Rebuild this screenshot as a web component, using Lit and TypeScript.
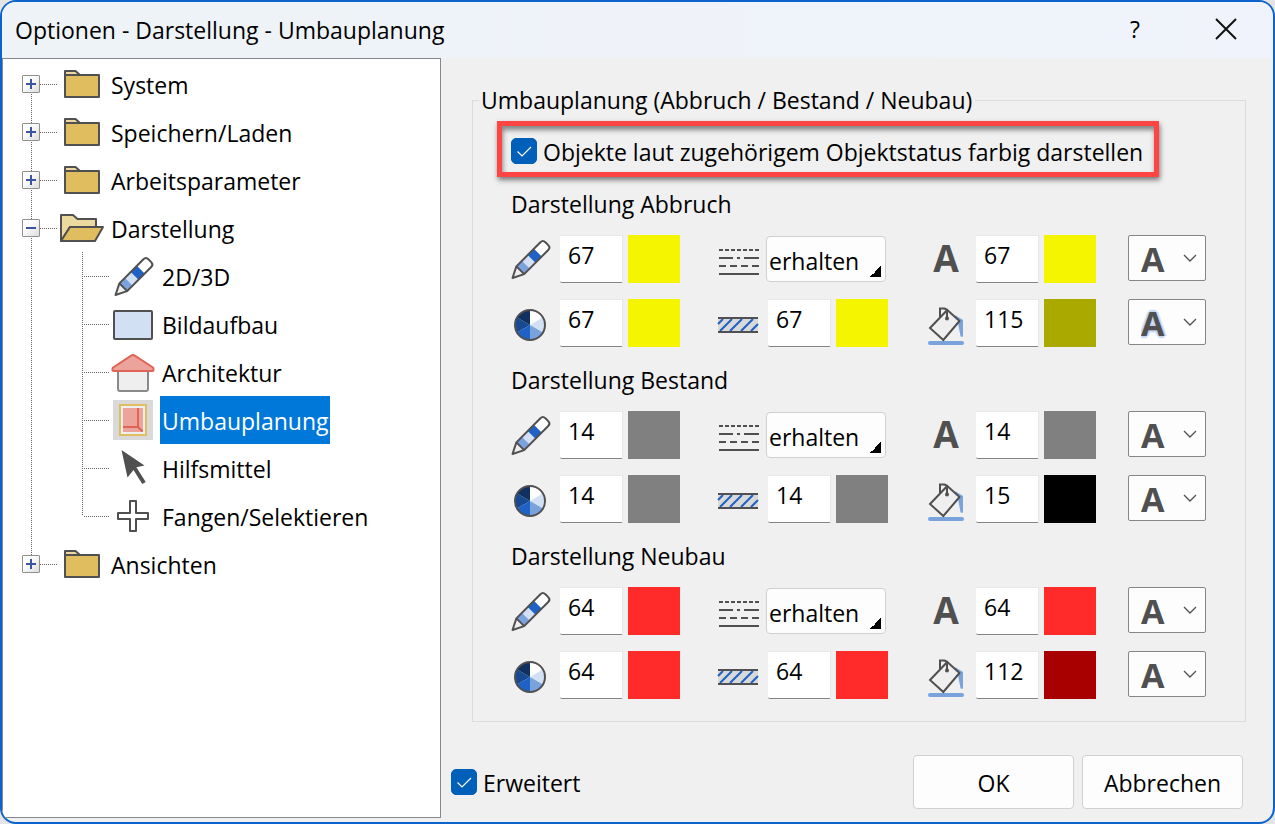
import { LitElement, html, svg, css } from "lit";
import { customElement, property } from "lit/decorators.js";

type Pair = { value: string; color: string };
type Section = { title: string; pen: Pair; text: Pair; color: Pair; hatch: Pair; fill: Pair; glow: boolean };

const SECTIONS: Section[] = [
  {
    title: "Darstellung Abbruch",
    pen: { value: "67", color: "#f5f500" },
    text: { value: "67", color: "#f5f500" },
    color: { value: "67", color: "#f5f500" },
    hatch: { value: "67", color: "#f5f500" },
    fill: { value: "115", color: "#a9a900" },
    glow: true,
  },
  {
    title: "Darstellung Bestand",
    pen: { value: "14", color: "#808080" },
    text: { value: "14", color: "#808080" },
    color: { value: "14", color: "#808080" },
    hatch: { value: "14", color: "#808080" },
    fill: { value: "15", color: "#000000" },
    glow: false,
  },
  {
    title: "Darstellung Neubau",
    pen: { value: "64", color: "#ff2b2b" },
    text: { value: "64", color: "#ff2b2b" },
    color: { value: "64", color: "#ff2b2b" },
    hatch: { value: "64", color: "#ff2b2b" },
    fill: { value: "112", color: "#a80000" },
    glow: false,
  },
];

const TREE = [
  { label: "System", icon: "folder", sign: "plus" },
  { label: "Speichern/Laden", icon: "folder", sign: "plus" },
  { label: "Arbeitsparameter", icon: "folder", sign: "plus" },
  { label: "Darstellung", icon: "folderOpen", sign: "minus" },
  { label: "2D/3D", icon: "pencil", child: true },
  { label: "Bildaufbau", icon: "screen", child: true },
  { label: "Architektur", icon: "house", child: true },
  { label: "Umbauplanung", icon: "rebuild", child: true, selected: true },
  { label: "Hilfsmittel", icon: "pointer", child: true },
  { label: "Fangen/Selektieren", icon: "cross", child: true, lastChild: true },
  { label: "Ansichten", icon: "folder", sign: "plus" },
] as Array<{ label: string; icon: string; sign?: string; child?: boolean; selected?: boolean; lastChild?: boolean }>;

const ICONS: Record<string, unknown> = {
  folder: svg`<g stroke="#505050" stroke-width="2" stroke-linejoin="round">
    <path d="M6 13V9H16.500L21 13" fill="#ecd9a0"/><rect x="6" y="13" width="34" height="22" fill="#e0be60"/></g>`,
  folderOpen: svg`<g stroke="#505050" stroke-width="2" stroke-linejoin="round">
    <path d="M2 35V9H14L18.500 13H37V21H11Z" fill="#ecd9a0"/><path d="M2 35L11 21H44L36 35Z" fill="#e0be60"/></g>`,
  pencil: svg`<g transform="translate(4.500 41) rotate(-45)" stroke-linejoin="round">
      <path d="M0 0L11 -5.500V5.500Z" fill="#efefef"/>
      <rect x="11" y="-5.500" width="8" height="11" fill="#7aa3de"/>
      <rect x="19" y="-5.500" width="8" height="11" fill="#d2e0f4"/>
      <rect x="27" y="-5.500" width="9" height="11" fill="#1f62c5"/>
      <path d="M36 -5.500H46L48.500 -3V3L46 5.500H36Z" fill="#fff"/>
      <path d="M0 0L11 -5.500H45Q48.500 -5.500 48.500 -2V2Q48.500 5.500 45 5.500H11ZM11 -5.500V5.500" fill="none" stroke="#505050" stroke-width="2"/>
    </g>`,
  screen: svg`<rect x="3" y="9" width="38" height="28" rx="1" fill="#d2e0f4" stroke="#505050" stroke-width="2"/>`,
  house: svg`<path d="M7 20H37V39Q37 41 35 41H9Q7 41 7 39Z" fill="#efefef" stroke="#8a8a8a" stroke-width="2"/>
    <path d="M21 5.200Q22 4.600 23 5.200L42 17.500Q43.500 21 41 21H3Q.5 21 2 17.500Z" fill="#eca39b" stroke="#e06456" stroke-width="2" stroke-linejoin="round"/>`,
  rebuild: svg`<rect x="2" y="2" width="40" height="40" fill="#d9d9d9"/>
    <rect x="9" y="7" width="26" height="30" fill="#efefef" stroke="#e0be60" stroke-width="2"/>
    <rect x="12" y="10" width="20" height="24" fill="#eca39b"/>
    <path d="M27 10V29H12M27 29L31.500 33.500" fill="none" stroke="#e06456" stroke-width="2"/>`,
  pointer: svg`<path d="M10.500 4L33.500 19.500L24.500 21.500L16.500 31.500Z" fill="#505050"/><path d="M21 18L33 37" stroke="#505050" stroke-width="4"/>`,
  cross: svg`<path d="M19 7H25V19H37V25H25V37H19V25H7V19H19Z" fill="#fff" stroke="#505050" stroke-width="2" stroke-linejoin="round"/>`,
  wheel: svg`<g transform="translate(22 24)">
    <path d="M0 0V-15A15 15 0 0 1 13 -7.500Z" fill="#fff"/><path d="M0 0L13 -7.500A15 15 0 0 1 13 7.500Z" fill="#d2e0f4"/>
    <path d="M0 0L13 7.500A15 15 0 0 1 0 15Z" fill="#7aa3de"/><path d="M0 0V15A15 15 0 0 1 -13 7.500Z" fill="#1f62c5"/>
    <path d="M0 0L-13 7.500A15 15 0 0 1 -13 -7.500Z" fill="#184a94"/><path d="M0 0L-13 -7.500A15 15 0 0 1 0 -15Z" fill="#10315f"/>
    <circle r="15" fill="none" stroke="#505050" stroke-width="2"/></g>`,
  lines: svg`<g stroke="#505050" stroke-width="2" fill="none">
    <path d="M3 13H43" stroke-dasharray="4 2"/><path d="M3 21H17M21 21H24M28 21H43"/>
    <path d="M3 29H43" stroke-dasharray="7 4"/><path d="M3 37H43"/></g>`,
  hatch: svg`<rect x="2" y="17" width="40" height="14" fill="#d9d9d9"/>
    <path d="M2 23L7 18M4 30L16 18M14 30L26 18M25 30L37 18M35 30L42 23" stroke="#1f62c5" stroke-width="2" fill="none"/>
    <path d="M2 17H42M2 31H42" stroke="#505050" stroke-width="2"/>`,
  bucket: svg`<path d="M31 14L39 19V35Q38 37 36.500 35L34 22Z" fill="#7aa3de"/>
    <path d="M6 42H38" stroke="#7aa3de" stroke-width="4" stroke-linecap="round"/>
    <path d="M23.300 9L35.500 20L19.300 39L6 27Z" fill="#efefef" stroke="#505050" stroke-width="2"/>
    <path d="M16 17V7.500H20Q23 7.500 23 11V17" fill="none" stroke="#505050" stroke-width="2"/><circle cx="23" cy="17.500" r="2" fill="#505050"/>`,
};

const icon = (name: string) => html`<svg class="icon" viewBox="0 0 44 44" width="44" height="44" aria-hidden="true">${ICONS[name]}</svg>`;

const base = css`
  * { box-sizing: border-box; }
  .icon { display: block; overflow: visible; }
`;

@customElement("options-tree")
class OptionsTree extends LitElement {
  static styles = [
    base,
    css`
      :host { display: block; padding-top: 1px; background: #fff; border: 1px solid #828790; }
      .list { list-style: none; margin: 0; padding: 0; }
      .row { display: flex; align-items: center; height: 48px; white-space: nowrap; }
      .rail, .branch {
        --v: repeating-linear-gradient(to bottom, #666 0 1px, transparent 1px 2px);
        --h: repeating-linear-gradient(to right, #666 0 1px, transparent 1px 2px);
        flex: none; height: 48px; background-repeat: no-repeat;
      }
      .rail { width: 56px; padding: 15px 0 0 19px; background-image: var(--v), var(--h); background-position: 28px 0, 37px 24px; background-size: 1px 48px, 18px 1px; }
      .first { background-position: 28px 24px, 37px 24px; background-size: 1px 24px, 18px 1px; }
      .last { background-size: 1px 24px, 18px 1px; }
      .plain { background-size: 1px 48px, 0 0; }
      .branch { width: 52px; background-image: var(--v), var(--h); background-position: 23px 0, 25px 24px; background-size: 1px 48px, 25px 1px; }
      .end { background-size: 1px 24px, 25px 1px; }
      .toggle {
        display: block; width: 18px; height: 18px; padding: 0; border: 1px solid #919191; border-radius: 1px;
        background: linear-gradient(135deg, #fff 30%, #dcdcdc);
      }
      .sign { display: block; }
      .name { margin-left: 6px; padding: 2px 2px 0; line-height: 46px; }
      .nested { margin-left: 5px; }
      .selected { background: #0078d9; color: #fff; }
    `,
  ];
  render() {
    const last = TREE.length - 1;
    return html`<ul class="list">${TREE.map((n, i) => html`
      <li class="row">
        <div class="rail ${n.child ? "plain" : i === 0 ? "first" : i === last ? "last" : ""}">
          ${n.sign ? html`<button class="toggle" aria-label="${n.label}" aria-expanded="${n.sign === "minus"}">
            <svg class="sign" viewBox="0 0 16 16" width="16" height="16"><path d="${n.sign === "plus" ? "M3 8H13M8 3V13" : "M3 8H13"}" stroke="#3a56a0" stroke-width="2"/></svg>
          </button>` : ""}
        </div>
        ${n.child ? html`<div class="branch ${n.lastChild ? "end" : ""}"></div>` : ""}
        ${icon(n.icon)}
        <span class="name ${n.child ? "nested" : ""} ${n.selected ? "selected" : ""}">${n.label}</span>
      </li>`)}</ul>`;
  }
}

@customElement("check-field")
class CheckField extends LitElement {
  @property() label = "";
  static styles = [
    base,
    css`
      :host { display: inline-block; }
      .line { display: flex; align-items: center; gap: 6px; white-space: nowrap; line-height: 32px; }
      .tick { display: grid; flex: none; width: 26px; height: 26px; }
      .tick > * { grid-area: 1 / 1; }
      .box { appearance: none; width: 26px; height: 26px; margin: 0; border: 1px solid #868686; border-radius: 5px; background: #fff; }
      .box:checked { background: #005fb8; border-color: #005fb8; }
      .mark { pointer-events: none; visibility: hidden; }
      .box:checked + .mark { visibility: visible; }
      .text { padding-top: 2px; }
    `,
  ];
  render() {
    return html`<label class="line"><span class="tick"><input class="box" type="checkbox" checked />
      <svg class="mark" viewBox="0 0 26 26" width="26" height="26" aria-hidden="true"><path d="M6.500 13.500L11 18L20 9" fill="none" stroke="#fff" stroke-width="1.200"/></svg></span>
      <span class="text">${this.label}</span></label>`;
  }
}

@customElement("status-section")
class StatusSection extends LitElement {
  @property({ attribute: false }) data!: Section;
  static styles = [
    base,
    css`
      :host { display: block; }
      .title { margin: 0 0 16px; font-size: inherit; font-weight: normal; line-height: 30px; }
      .grid { display: grid; grid-template-columns: 208px 208px 201px 78px; row-gap: 16px; }
      .cell { display: flex; height: 48px; }
      .sym { display: flex; align-items: center; justify-content: center; flex: none; width: 38px; margin-right: 11px; height: 48px; }
      .sym > * { flex: none; }
      .letter { color: #505050; font-weight: 700; font-size: 37px; line-height: 46px; padding-bottom: 2px; }
      .num {
        width: 63px; height: 48px; margin: 0 5px 0 0; padding: 0 0 8px 8px; font: inherit; color: #000;
        background: #fff; border: 1px solid #e8e8e8; border-left: 0; border-bottom-color: #868686; border-radius: 2px; outline: 0;
      }
      .swatch { width: 52px; height: 48px; padding: 0; border: 0; }
      .style {
        appearance: none; width: 120px; height: 46px; margin: 1px 0 0 -2px; padding: 4px 0 0 2px; font: inherit; color: #000;
        border: 1px solid #d0d0d0; border-radius: 4px;
        background: linear-gradient(135deg, transparent 50%, #000 50%) right 4px bottom 4px / 11px 11px no-repeat #fdfdfd;
      }
      .pick { display: grid; height: 46px; }
      .pick > * { grid-area: 1 / 1; }
      .drop {
        appearance: none; width: 78px; height: 46px; padding: 0 0 4px 12px; font: inherit; font-weight: 700; font-size: 34px;
        color: #505050; background: #fdfdfd; border: 1px solid #868686; border-radius: 2px;
      }
      .glow { text-shadow: 0 0 3px #b8d0f0, 2px 0 1px #c8daf3, -2px 0 1px #c8daf3, 0 2px 1px #c8daf3, 0 -2px 1px #c8daf3; }
      .chev { place-self: center end; margin-right: 9px; pointer-events: none; }
    `,
  ];
  private field(sym: unknown, name: string, p: Pair) {
    return html`<div class="cell"><span class="sym">${sym}</span>
      <input class="num" type="text" aria-label="${name}" .value=${p.value} />
      <button class="swatch" aria-label="Farbe ${name}" style="background:${p.color}"></button></div>`;
  }
  private drop(glow: boolean, name: string) {
    return html`<div class="pick"><select class="drop ${glow ? "glow" : ""}" aria-label="${name}"><option>A</option></select>
      <svg class="chev" viewBox="0 0 14 8" width="14" height="8" aria-hidden="true"><path d="M1 1L7 7L13 1" fill="none" stroke="#505050" stroke-width="1.300"/></svg></div>`;
  }
  render() {
    const d = this.data;
    return html`<h3 class="title">${d.title}</h3>
      <div class="grid">
        ${this.field(icon("pencil"), "Stift", d.pen)}
        <div class="cell"><span class="sym">${icon("lines")}</span>
          <select class="style" aria-label="Linientyp"><option>erhalten</option></select></div>
        ${this.field(html`<span class="letter">A</span>`, "Text", d.text)}
        ${this.drop(false, "Textstil")}
        ${this.field(icon("wheel"), "Farbe", d.color)}
        ${this.field(icon("hatch"), "Schraffur", d.hatch)}
        ${this.field(icon("bucket"), "Füllung", d.fill)}
        ${this.drop(d.glow, "Textumrandung")}
      </div>`;
  }
}

@customElement("app-root")
class AppRoot extends LitElement {
  static styles = [
    base,
    css`
      :host { display: block; background: #e4e4e4; font-family: "Open Sans", "Segoe UI", sans-serif; font-size: 23px; color: #000; }
      .dialog {
        display: flex; flex-direction: column; min-height: 100vh; overflow: hidden;
        border: 2px solid #0c63cc; border-radius: 16px; background: #f0f0f0;
      }
      .bar { display: flex; align-items: center; height: 56px; padding: 0 36px 2px 13px; background: linear-gradient(to right, #eef3f7, #f0f3fb); }
      .heading { flex: 1; margin: 0; padding-top: 2px; font-size: inherit; font-weight: normal; }
      .tool { display: grid; place-items: center; width: 22px; height: 40px; padding: 0; border: 0; background: none; font: inherit; font-weight: 500; }
      .tools { display: flex; gap: 69px; align-items: center; }
      .body { display: flex; flex: 1; }
      .tree { flex: none; width: 439px; margin-bottom: 4px; }
      .pane { display: flex; flex-direction: column; flex: 1; min-width: 0; padding-top: 26px; }
      .group { margin: 0 27px 0 31px; padding: 0 24px 22px; border: 1px solid #dcdcdc; min-width: 0; }
      .legend { margin-left: -18px; padding: 0 3px 0 2px; line-height: 32px; }
      .marked {
        display: flex; align-items: center; width: fit-content; height: 56px; margin: 5px 0 12px; padding: 3px 11px 0 9px;
        border: 5px solid #ff4444; box-shadow: 1px 3px 5px rgba(0,0,0,.5), inset 1px 4px 5px rgba(0,0,0,.45);
      }
      .sections { display: grid; gap: 18px; padding-left: 14px; }
      .footer { display: flex; align-items: center; gap: 8px; margin-top: auto; padding: 0 30px 13px 10px; }
      .more { margin-right: auto; }
      .push { width: 161px; height: 54px; padding: 2px 0 0; font: inherit; color: #000; background: #fdfdfd; border: 1px solid #d0d0d0; border-radius: 4px; }
    `,
  ];
  render() {
    return html`<main class="dialog">
      <header class="bar"><h1 class="heading">Optionen - Darstellung - Umbauplanung</h1>
        <div class="tools"><button class="tool" aria-label="Hilfe">?</button>
        <button class="tool" aria-label="Schließen"><svg class="icon" viewBox="0 0 22 22" width="22" height="22"><path d="M1 1L21 21M21 1L1 21" stroke="#111" stroke-width="2"/></svg></button></div>
      </header>
      <div class="body">
        <options-tree class="tree"></options-tree>
        <section class="pane">
          <fieldset class="group"><legend class="legend">Umbauplanung (Abbruch / Bestand / Neubau)</legend>
            <div class="marked"><check-field label="Objekte laut zugehörigem Objektstatus farbig darstellen"></check-field></div>
            <div class="sections">${SECTIONS.map((s) => html`<status-section .data=${s}></status-section>`)}</div>
          </fieldset>
          <footer class="footer"><check-field class="more" label="Erweitert"></check-field>
            <button class="push">OK</button><button class="push">Abbrechen</button></footer>
        </section>
      </div>
    </main>`;
  }
}
